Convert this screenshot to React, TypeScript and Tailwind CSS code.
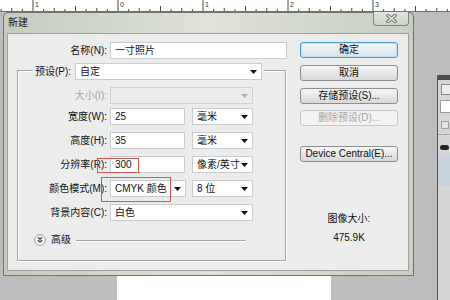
import React from "react";

function Ruler() {
  const ticks = [];
  for (let i = -4; i < 40; i++) {
    const x = 33 + i * 10.625;
    let h = 2;
    if (i % 8 === 0) h = 11;
    else if (i % 4 === 0) h = 5;
    else if (i % 2 === 0) h = 3;
    ticks.push(
      <line key={"t" + i} x1={x} x2={x} y1={11 - h} y2={11} stroke="#4a4a4a" strokeWidth="1" />,
    );
    if (i % 8 === 0) {
      ticks.push(
        <text key={"n" + i} x={x + 2} y={7} fontSize="7" fill="#333" fontFamily="Liberation Sans, sans-serif">
          {Math.abs(i / 8 - 1)}
        </text>,
      );
    }
  }
  return (
    <svg width="450" height="12" className="block">
      <rect x="0" y="0" width="450" height="12" fill="#fff" />
      {ticks}
      <line x1="0" x2="450" y1="11.5" y2="11.5" stroke="#707070" />
    </svg>
  );
}

function Arrow({ disabled }: { disabled?: boolean }) {
  return (
    <svg width="7" height="4" viewBox="0 0 7 4" className="shrink-0">
      <path d="M0 0h7L3.5 4z" fill={disabled ? "#b0b0b0" : "#111"} />
    </svg>
  );
}

function Select({ value, className, disabled }: { value: string; className: string; disabled?: boolean }) {
  return (
    <div
      className={
        "h-[17px] flex items-center justify-between pl-[4px] pr-[4px] border " +
        (disabled ? "border-[#d0d1d3] bg-[#ebebeb] " : "border-[#c9cbcf] bg-white ") +
        className
      }
    >
      <span>{value}</span>
      <Arrow disabled={disabled} />
    </div>
  );
}

function Input({ value, className }: { value: string; className: string }) {
  return (
    <div className={"h-[17px] flex items-center pl-[4px] border border-[#c9cbcf] bg-white " + className}>
      {value}
    </div>
  );
}

function Row({ label, disabled, children, className }: { label: string; disabled?: boolean; children: React.ReactNode; className: string }) {
  return (
    <div className={"flex items-center " + className}>
      <span className={"w-[89px] text-right " + (disabled ? "text-[#a6a6a6]" : "")}>{label}</span>
      <div className="ml-[3px] flex items-center">{children}</div>
    </div>
  );
}

function Button({ label, variant }: { label: string; variant?: "default" | "disabled" }) {
  if (variant === "default") {
    return (
      <div className="h-[16px] w-[98px] flex items-center justify-center rounded-[3px] border border-[#4a9ad0] bg-linear-to-b from-[#f3f8fb] to-[#dbe2e7] shadow-[inset_0_0_0_1px_#bfe3f7]">
        {label}
      </div>
    );
  }
  if (variant === "disabled") {
    return (
      <div className="h-[16px] w-[98px] flex items-center justify-center rounded-[3px] border border-[#c4c7ca] bg-[#f2f2f2] text-[#a6a6a6]">
        {label}
      </div>
    );
  }
  return (
    <div className="h-[16px] w-[98px] flex items-center justify-center rounded-[3px] border border-[#8c8e90] bg-linear-to-b from-[#f6f6f6] to-[#d9d9d9]">
      {label}
    </div>
  );
}

function Advanced() {
  return (
    <div className="mt-[13px] h-[12px] flex items-center">
      <svg width="12" height="12" viewBox="0 0 12 12" className="ml-[16px] shrink-0">
        <circle cx="6" cy="6" r="5.5" fill="#f6f6f6" stroke="#a3a3a3" />
        <path d="M3.8 3.4l2.2 1.8 2.2-1.8M3.8 6.2l2.2 1.8 2.2-1.8" fill="none" stroke="#333" strokeWidth="1.1" />
      </svg>
      <span className="ml-[5px]">高级</span>
      <div className="ml-[5px] w-[170px] h-0 border-t border-[#a3a3a3] shadow-[0_1px_0_#fff]" />
    </div>
  );
}

function Dialog() {
  return (
    <div className="absolute left-[3px] top-[12px] w-[411px] h-[264px] flex flex-col border border-[#6e7769] rounded-t-[5px] bg-linear-to-r from-[#c5ccbe] via-[#dfe2d9] to-[#c8cec1]">
      <div className="relative h-[20px] shrink-0 flex items-center pl-[4px] text-[#1a1a1a]">
        新建
        <div className="absolute right-[4px] top-[-1px] w-[36px] h-[14px] flex items-center justify-center rounded-b-[4px] border border-t-0 border-[#7d8577] bg-linear-to-b from-[#e2e5de] to-[#cdd2c7]">
          <svg width="11" height="9" viewBox="0 0 11 9">
            <path d="M2 1.5L9 7.5M9 1.5L2 7.5" stroke="#6c7368" strokeWidth="3.4" strokeLinecap="square" />
            <path d="M2 1.5L9 7.5M9 1.5L2 7.5" stroke="#f3f3f3" strokeWidth="1.3" strokeLinecap="square" />
          </svg>
        </div>
      </div>
      <div className="flex-1 ml-[3px] mr-[4px] mb-[4px] border border-[#9ea496] bg-[#ececec] flex">
        <div className="w-[282px] pt-[8px] flex flex-col">
          <div className="h-[17px] flex items-center">
            <span className="w-[99px] text-right">名称(N):</span>
            <Input value="一寸照片" className="ml-[3px] w-[177px]" />
          </div>
          <div className="mt-[11px] ml-[9px] w-[269px] h-[191px] border border-[#a3a3a3] shadow-[inset_1px_1px_0_#fff,1px_1px_0_#fff] flex flex-col">
            <div className="-mt-[8px] ml-[15px] px-[2px] w-fit h-[17px] flex items-center bg-[#ececec]">
              <span className="w-[37px]">预设(P):</span>
              <Select value="自定" className="ml-[3px] w-[187px]" />
            </div>
            <Row label="大小(I):" disabled className="mt-[7px]">
              <Select value="" disabled className="w-[143px]" />
            </Row>
            <Row label="宽度(W):" className="mt-[4px]">
              <Input value="25" className="w-[75px]" />
              <Select value="毫米" className="ml-[7px] w-[61px]" />
            </Row>
            <Row label="高度(H):" className="mt-[7px]">
              <Input value="35" className="w-[75px]" />
              <Select value="毫米" className="ml-[7px] w-[61px]" />
            </Row>
            <Row label="分辨率(R):" className="mt-[7px]">
              <Input value="300" className="w-[75px]" />
              <Select value="像素/英寸" className="ml-[7px] w-[61px]" />
            </Row>
            <Row label="颜色模式(M):" className="mt-[7px]">
              <Select value="CMYK 颜色" className="w-[76px]" />
              <Select value="8 位" className="ml-[6px] w-[61px]" />
            </Row>
            <Row label="背景内容(C):" className="mt-[7px]">
              <Select value="白色" className="w-[143px]" />
            </Row>
            <Advanced />
          </div>
        </div>
        <div className="ml-[10px] w-[98px] pt-[8px] flex flex-col">
          <Button label="确定" variant="default" />
          <div className="mt-[7px]">
            <Button label="取消" />
          </div>
          <div className="mt-[7px]">
            <Button label="存储预设(S)..." />
          </div>
          <div className="mt-[6px]">
            <Button label="删除预设(D)..." variant="disabled" />
          </div>
          <div className="mt-[20px]">
            <Button label="Device Central(E)..." />
          </div>
          <div className="mt-[51px] text-center">图像大小:</div>
          <div className="mt-[7px] text-center">475.9K</div>
        </div>
      </div>
    </div>
  );
}

function SidePanel() {
  return (
    <div className="absolute left-[437px] top-[75px] w-[13px] h-[225px] border-l border-[#555] bg-[#d6d6d6] flex flex-col">
      <div className="h-[5px] bg-[#4b4b4b]" />
      <div className="mt-[4px] ml-[3px] w-[10px] h-[11px] border border-[#8a8a8a] bg-[#eeeeee]" />
      <div className="mt-[5px] ml-[2px] w-[11px] h-[13px] border border-[#9a9a9a] bg-white" />
      <div className="mt-[8px] ml-[3px] w-[8px] h-[8px] border border-[#a0a0a0] bg-[#e4e4e4]" />
      <div className="mt-[5px] h-px bg-[#a8a8a8]" />
      <div className="mt-[10px] ml-[2px] w-[9px] h-[5px] rounded-full bg-[#222]" />
      <div className="mt-[6px] h-[30px] bg-[#c9d3e0]" />
    </div>
  );
}

export default function App() {
  return (
    <div className="relative w-[450px] h-[300px] overflow-hidden bg-[#bdbdbd] font-['Liberation_Sans','Noto_Sans_CJK_SC',sans-serif] text-[10px] leading-[12px] text-[#111]">
      <Ruler />
      <div className="absolute left-[117px] top-[276px] w-[214px] h-[24px] bg-white" />
      <SidePanel />
      <Dialog />
      <div className="absolute left-[97px] top-[158px] w-[42px] h-[15px] border border-[#d9534f]" />
      <div className="absolute left-[101px] top-[177px] w-[70px] h-[25px] border border-[#d9534f]" />
    </div>
  );
}
